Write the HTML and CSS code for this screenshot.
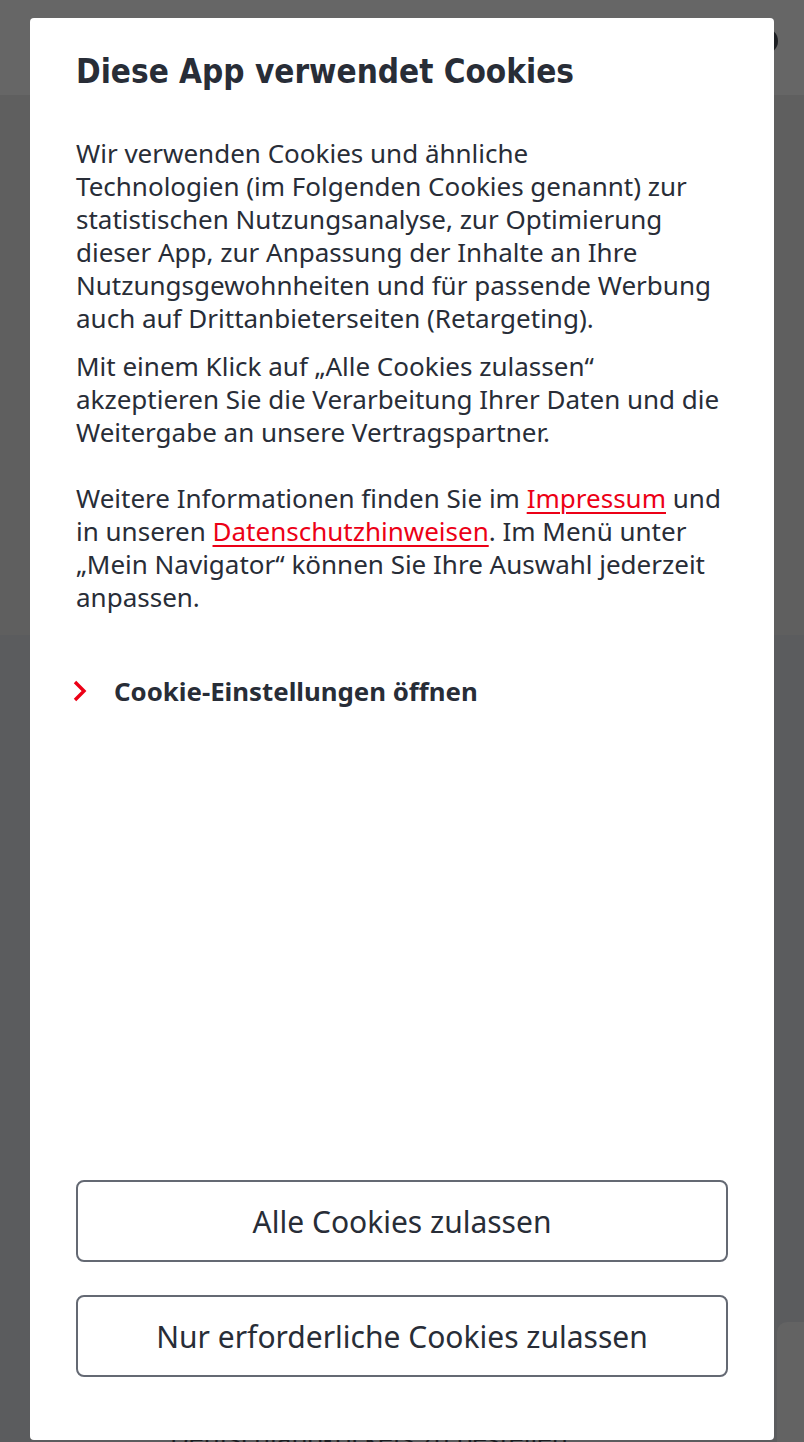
FILE: index.html
```html
<!DOCTYPE html>
<html lang="de">
<head>
    <meta charset="UTF-8">
    <meta name="viewport" content="width=device-width, initial-scale=1.0">
    <title>Cookies</title>
    <link rel="stylesheet" href="styles.css">
</head>
<body>
    <!-- Page behind the overlay -->
    <div class="page">
        <header class="topbar">
            <span class="topbar-icon"></span>
        </header>
        <section class="hero"></section>
        <section class="content">
            <div class="side-card"></div>
            <p class="ticket-text">Deutschland-Tickets zu bestellen</p>
        </section>
    </div>

    <!-- Cookie dialog -->
    <div class="dialog" role="dialog" aria-labelledby="dialogTitle">
        <h1 id="dialogTitle" class="dialog-title">Diese App verwendet Cookies</h1>

        <div class="dialog-text">
            <p>Wir verwenden Cookies und ähnliche<br>
               Technologien (im Folgenden Cookies genannt) zur<br>
               statistischen Nutzungsanalyse, zur Optimierung<br>
               dieser App, zur Anpassung der Inhalte an Ihre<br>
               Nutzungsgewohnheiten und für passende Werbung<br>
               auch auf Drittanbieterseiten (Retargeting).</p>
            <p>Mit einem Klick auf „Alle Cookies zulassen“<br>
               akzeptieren Sie die Verarbeitung Ihrer Daten und die<br>
               Weitergabe an unsere Vertragspartner.</p>
            <p class="info">Weitere Informationen finden Sie im <a href="#">Impressum</a> und<br>
               in unseren <a href="#">Datenschutzhinweisen</a>. Im Menü unter<br>
               „Mein Navigator“ können Sie Ihre Auswahl jederzeit<br>
               anpassen.</p>
        </div>

        <button type="button" class="settings-link">
            <svg class="chevron" width="16" height="22" viewBox="0 0 16 22">
                <path d="M3 2 L12 11 L3 20" fill="none" stroke="#ec0016" stroke-width="3.4"/>
            </svg>
            <span>Cookie-Einstellungen öffnen</span>
        </button>

        <div class="dialog-actions">
            <button type="button" class="btn">Alle Cookies zulassen</button>
            <button type="button" class="btn">Nur erforderliche Cookies zulassen</button>
        </div>
    </div>
</body>
</html>
```

FILE: styles.css
```css
body {
    margin: 0;
    padding: 0;
    font-family: "Noto Sans", "Open Sans", sans-serif;
    color: #282d37;
    background: #5b5c5e;
    overflow: hidden;
}

/* Page behind the overlay */
.page {
    height: 1442px;
    display: flex;
    flex-direction: column;
    overflow: hidden;
}

.topbar {
    height: 95px;
    background: #666666;
    position: relative;
}

.topbar-icon {
    position: absolute;
    right: 26px;
    top: 28px;
    width: 26px;
    height: 26px;
    border-radius: 50%;
    background: #1c1e22;
}

.hero {
    height: 540px;
    background: #5f5f5f;
}

.content {
    flex: 1;
    background: #5b5c5e;
    position: relative;
    overflow: hidden;
}

.side-card {
    position: absolute;
    left: 777px;
    top: 687px;
    width: 60px;
    height: 200px;
    border-radius: 10px;
    background: #636363;
}

.ticket-text {
    position: absolute;
    left: 170px;
    top: 788px;
    margin: 0;
    font-size: 26px;
    line-height: 30px;
    color: #1c1e22;
    white-space: nowrap;
}

/* Dialog */
.dialog {
    position: fixed;
    left: 30px;
    top: 18px;
    width: 744px;
    height: 1422px;
    box-sizing: border-box;
    padding: 30px 46px 63px;
    background: #ffffff;
    border-radius: 4px;
    display: flex;
    flex-direction: column;
}

.dialog-title {
    margin: 0 0 41px;
    font-family: "DejaVu Sans Condensed", "DejaVu Sans", sans-serif;
    font-stretch: condensed;
    font-size: 33px;
    line-height: 48px;
    font-weight: bold;
    color: #282d37;
}

.dialog-text {
    font-size: 26px;
    line-height: 33px;
    white-space: nowrap;
}

.dialog-text p {
    margin: 0 0 15px;
}

.dialog-text p.info {
    margin-top: 33px;
}

.dialog-text a {
    color: #ec0016;
    text-decoration: underline;
    text-underline-offset: 4px;
    text-decoration-thickness: 2px;
}

.settings-link {
    display: flex;
    align-items: center;
    gap: 26px;
    margin: 44px 0 0 -4px;
    padding: 0;
    background: none;
    border: none;
    font-family: inherit;
    font-size: 25.8px;
    font-weight: bold;
    color: #282d37;
    cursor: pointer;
    text-align: left;
}

.dialog-actions {
    margin-top: auto;
    display: flex;
    flex-direction: column;
    gap: 33px;
}

.btn {
    height: 82px;
    background: #ffffff;
    border: 2px solid #646973;
    border-radius: 8px;
    font-family: inherit;
    font-size: 30px;
    color: #282d37;
    cursor: pointer;
}
```
